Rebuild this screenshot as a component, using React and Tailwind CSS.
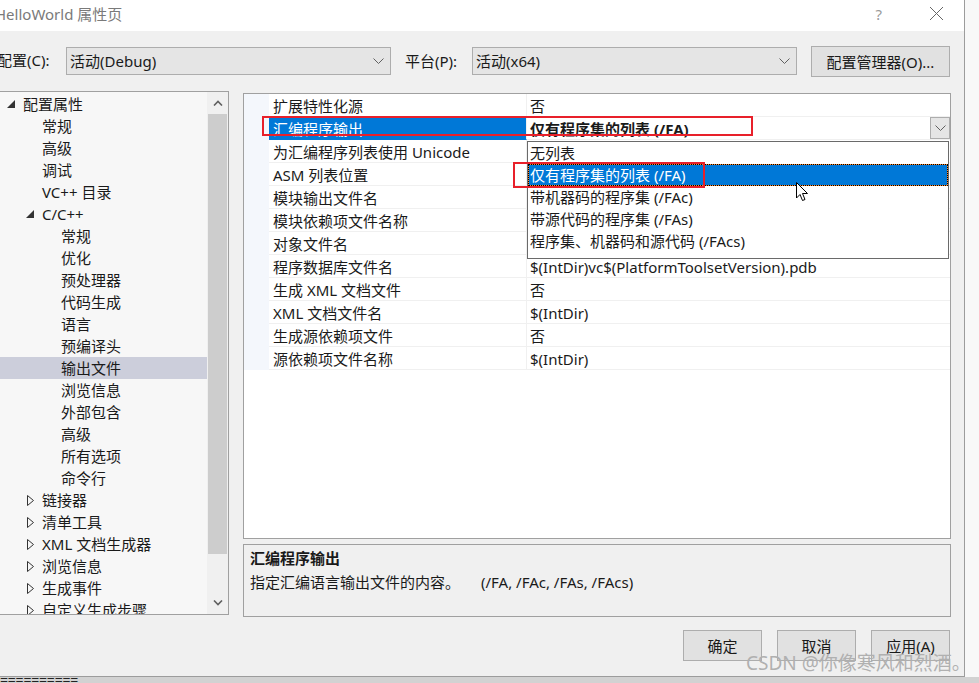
import React from 'react'

const tree = [
  { t: '配置属性', lv: 0, exp: 'open' },
  { t: '常规', lv: 1 },
  { t: '高级', lv: 1 },
  { t: '调试', lv: 1 },
  { t: 'VC++ 目录', lv: 1 },
  { t: 'C/C++', lv: 1, exp: 'open' },
  { t: '常规', lv: 2 },
  { t: '优化', lv: 2 },
  { t: '预处理器', lv: 2 },
  { t: '代码生成', lv: 2 },
  { t: '语言', lv: 2 },
  { t: '预编译头', lv: 2 },
  { t: '输出文件', lv: 2, sel: true },
  { t: '浏览信息', lv: 2 },
  { t: '外部包含', lv: 2 },
  { t: '高级', lv: 2 },
  { t: '所有选项', lv: 2 },
  { t: '命令行', lv: 2 },
  { t: '链接器', lv: 1, exp: 'closed' },
  { t: '清单工具', lv: 1, exp: 'closed' },
  { t: 'XML 文档生成器', lv: 1, exp: 'closed' },
  { t: '浏览信息', lv: 1, exp: 'closed' },
  { t: '生成事件', lv: 1, exp: 'closed' },
  { t: '自定义生成步骤', lv: 1, exp: 'closed' },
]

const props = [
  ['扩展特性化源', '否'],
  ['汇编程序输出', '仅有程序集的列表 (/FA)', true],
  ['为汇编程序列表使用 Unicode', '否'],
  ['ASM 列表位置', '$(IntDir)'],
  ['模块输出文件名', '$(IntDir)'],
  ['模块依赖项文件名称', '$(IntDir)'],
  ['对象文件名', '$(IntDir)'],
  ['程序数据库文件名', '$(IntDir)vc$(PlatformToolsetVersion).pdb'],
  ['生成 XML 文档文件', '否'],
  ['XML 文档文件名', '$(IntDir)'],
  ['生成源依赖项文件', '否'],
  ['源依赖项文件名称', '$(IntDir)'],
]

const options = [
  '无列表',
  '仅有程序集的列表 (/FA)',
  '带机器码的程序集 (/FAc)',
  '带源代码的程序集 (/FAs)',
  '程序集、机器码和源代码 (/FAcs)',
]

function Chevron({ className = '' }) {
  return (
    <svg width="11" height="6" viewBox="0 0 11 6" className={className}>
      <path d="M0.5 0.5 L5.5 5.5 L10.5 0.5" fill="none" stroke="#606060" strokeWidth="1" />
    </svg>
  )
}

function Combo({ value }) {
  return (
    <div className="w-[325px] h-[28px] border border-[#adadad] bg-[#e5e5e5] flex items-center pl-[3px] pr-[6px]">
      <span className="flex-1">{value}</span>
      <Chevron />
    </div>
  )
}

function Btn({ children, className = '' }) {
  return (
    <div className={`h-[31px] border border-[#adadad] bg-[#e1e1e1] flex items-center justify-center ${className}`}>
      {children}
    </div>
  )
}

export default function App() {
  return (
    <div className="relative w-[979px] h-[683px] overflow-hidden bg-[#f8f8f8] font-[family-name:'Noto_Sans','Noto_Sans_CJK_SC',sans-serif] text-[15px] text-[#1a1a1a] leading-[22px]">
      <div className="w-[965px] h-[677px] bg-[#f0f0f0] border-r border-b border-[#9c9c9c] flex flex-col">
        {/* title bar */}
        <div className="h-[31px] bg-white flex items-center pb-[4px] shrink-0">
          <span className="ml-[-5px] text-[#7a7a7a]">HelloWorld 属性页</span>
          <span className="ml-auto mr-[47px] text-[#9a9a9a]">?</span>
          <svg width="15" height="15" viewBox="0 0 15 15" className="mr-[20px]">
            <path d="M1 1 L14 14 M14 1 L1 14" stroke="#666" strokeWidth="1" />
          </svg>
        </div>

        {/* config row */}
        <div className="h-[60px] pt-[15px] flex items-start shrink-0">
          <span className="ml-[-3px] w-[69px] h-[28px] flex items-center">配置(C):</span>
          <div className="mt-[1px]"><Combo value="活动(Debug)" /></div>
          <span className="ml-[14px] w-[67px] h-[28px] flex items-center mt-[1px]">平台(P):</span>
          <div className="mt-[1px]"><Combo value="活动(x64)" /></div>
          <Btn className="ml-[14px] w-[139px] h-[30px]">配置管理器(O)...</Btn>
        </div>

        {/* main */}
        <div className="flex flex-1">
          {/* tree */}
          <div className="w-[229px] h-[524px] border border-l-0 border-[#a0a0a0] bg-[#f7f7f7] flex">
            <div className="w-[207px] pt-[1px] overflow-hidden">
              {tree.map((n, i) => (
                <div
                  key={i}
                  className={`h-[22px] flex items-center whitespace-nowrap ${n.sel ? 'bg-[#cccedb]' : ''}`}
                  style={{ paddingLeft: 4 + 19 * n.lv }}
                >
                  <span className="w-[19px] flex items-center pl-[3px]">
                    {n.exp === 'open' && (
                      <svg width="8" height="8" viewBox="0 0 8 8">
                        <polygon points="8,0 8,8 0,8" fill="#333" />
                      </svg>
                    )}
                    {n.exp === 'closed' && (
                      <svg width="8" height="11" viewBox="0 0 8 11" className="ml-[1px]">
                        <polygon points="0.5,0.5 6.5,5.5 0.5,10.5" fill="none" stroke="#333" strokeWidth="1" />
                      </svg>
                    )}
                  </span>
                  <span>{n.t}</span>
                </div>
              ))}
            </div>
            <div className="w-[21px] bg-[#f0f0f0] flex flex-col">
              <div className="h-[22px] flex items-center justify-center">
                <svg width="10" height="6" viewBox="0 0 10 6">
                  <path d="M1 5.5 L5 1.5 L9 5.5" fill="none" stroke="#606060" strokeWidth="1.6" />
                </svg>
              </div>
              <div className="h-[440px] mx-[1px] bg-[#cdcdcd]" />
              <div className="flex-1" />
              <div className="h-[22px] flex items-center justify-center">
                <svg width="10" height="6" viewBox="0 0 10 6">
                  <path d="M1 0.5 L5 4.5 L9 0.5" fill="none" stroke="#606060" strokeWidth="1.6" />
                </svg>
              </div>
            </div>
          </div>

          {/* right column */}
          <div className="ml-[14px] w-[708px] flex flex-col">
            <div className="relative mt-[2px] h-[446px] border border-[#a0a0a0] bg-white">
              {props.map(([name, val, sel], i) => (
                <div key={i} className="h-[23px] flex whitespace-nowrap">
                  <div className="w-[25px] bg-[#f4f7fc]" />
                  <div
                    className={`w-[258px] pl-[4px] pt-[1px] border-b border-r border-[#f0f0f0] flex items-center ${
                      sel ? 'bg-[#0078d7] text-white border-b-[#0078d7]' : ''
                    }`}
                  >
                    {name}
                  </div>
                  <div className="flex-1 pl-[3px] pt-[1px] border-b border-[#f0f0f0] flex items-center">
                    {sel ? (
                      <>
                        <span className="flex-1 font-bold">{val}</span>
                        <div className="w-[20px] h-[22px] mt-[-1px] border border-[#adadad] bg-[#e5e5e5] flex items-center justify-center">
                          <Chevron />
                        </div>
                      </>
                    ) : (
                      val
                    )}
                  </div>
                </div>
              ))}

              {/* dropdown list */}
              <div className="absolute left-[283px] top-[47px] w-[422px] h-[118px] border border-[#6a6a6a] bg-white">
                {options.map((o, i) =>
                  i === 1 ? (
                    <div key={i} className="h-[22px] bg-[#ff8728]">
                      <div className="h-[22px] border border-dotted border-black bg-[#0078d7] bg-clip-padding text-white pl-[1px] flex items-center whitespace-nowrap">
                        {o}
                      </div>
                    </div>
                  ) : (
                    <div key={i} className="h-[22px] pl-[2px] flex items-center whitespace-nowrap">
                      {o}
                    </div>
                  )
                )}
              </div>

              {/* annotations */}
              <div className="absolute left-[18px] top-[22px] w-[491px] h-[20px] border-2 border-[#e8202a]" />
              <div className="absolute left-[269px] top-[68px] w-[192px] h-[26px] border-2 border-[#e8202a]" />

              {/* mouse cursor */}
              <svg width="13" height="20" viewBox="0 0 13 20" className="absolute left-[552px] top-[88px]">
                <path d="M0.5 0.5 L0.5 16 L4 12.5 L6.5 18.5 L9 17.5 L6.5 11.5 L11.5 11.5 Z" fill="white" stroke="black" strokeWidth="1" />
              </svg>
            </div>

            {/* description */}
            <div className="mt-[5px] h-[73px] border border-[#a0a0a0] px-[6px] pt-[1px]">
              <div className="h-[24px] leading-[24px] font-bold">汇编程序输出</div>
              <div className="h-[24px] leading-[24px] whitespace-nowrap">
                <span className="inline-block w-[231px]">指定汇编语言输出文件的内容。</span>
                <span>(/FA, /FAc, /FAs, /FAcs)</span>
              </div>
            </div>

            {/* buttons */}
            <div className="mt-[13px] flex justify-end gap-[15px] pr-[1px]">
              <Btn className="w-[79px]">确定</Btn>
              <Btn className="w-[79px]">取消</Btn>
              <Btn className="w-[79px]">应用(A)</Btn>
            </div>
          </div>
        </div>
      </div>

      {/* bottom strip */}
      <div className="h-[6px] bg-[#d2d2d2] overflow-hidden">
        <span className="block text-[14px] leading-[6px] text-[#222] tracking-[-0.2px]">==========</span>
      </div>

      {/* watermark */}
      <div className="absolute left-[746px] top-[650px] text-[19px] leading-[26px] text-[#b0b0b0] whitespace-nowrap">
        CSDN @你像寒风和烈酒。
      </div>
    </div>
  )
}
